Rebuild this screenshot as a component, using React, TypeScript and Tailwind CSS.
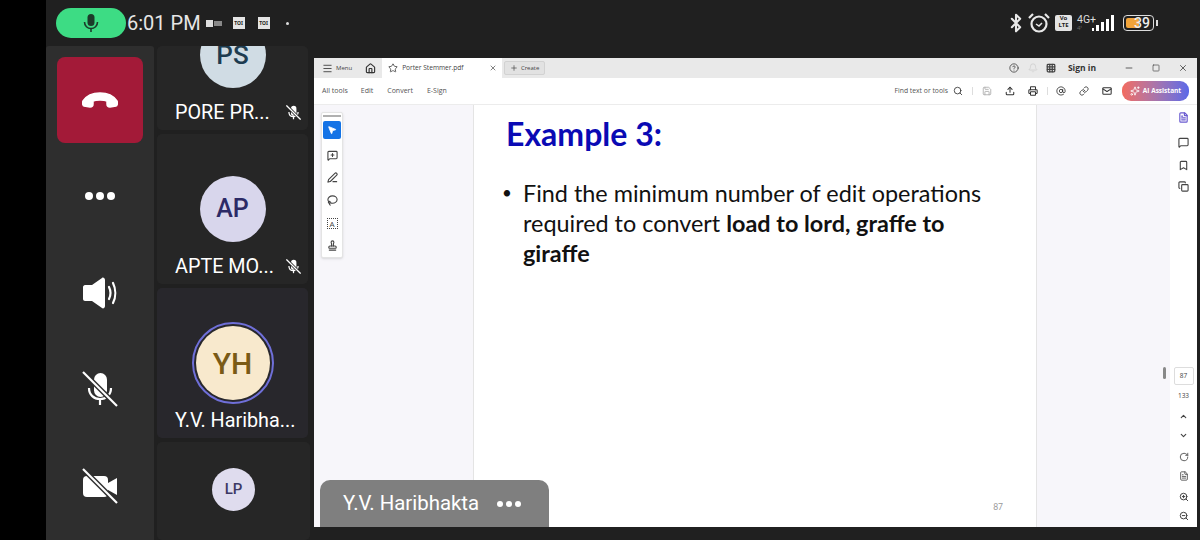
import { Bluetooth, Bookmark, ChevronDown, ChevronUp, Copy, FileText, Grid3x3, Home, Link, Lasso, Mail, Menu, MessageSquare, MessageSquarePlus, Minus, MousePointer2, PenLine, Plus, Printer, RotateCw, Save, Search, Star, Stamp, Upload, X, ZoomIn, ZoomOut, Bell, CircleHelp, Sparkles, Square, AtSign } from 'lucide-react'

const MicOffIcon = ({ size }: { size: number }) => (
  <svg width={size} height={size} viewBox="0 0 36 36" fill="none">
    <rect x="12" y="2" width="13" height="24" rx="6.5" fill="white" />
    <path d="M7 17c0 7 5 11 11 11s11-4 11-11" stroke="white" strokeWidth="2.2" />
    <path d="M18 28v6" stroke="white" strokeWidth="2.2" />
    <path d="M1 1l34 34" stroke="#2e2e2e" strokeWidth="5" />
    <path d="M1 1l34 34" stroke="white" strokeWidth="2.2" />
  </svg>
)

const VideoOffIcon = () => (
  <svg width="36" height="36" viewBox="0 0 36 36" fill="none">
    <rect x="1" y="8" width="25" height="21" rx="4" fill="white" />
    <path d="M26 15l9-5v17l-9-5z" fill="white" />
    <path d="M1 1l34 34" stroke="#2e2e2e" strokeWidth="5" />
    <path d="M1 1l34 34" stroke="white" strokeWidth="2.2" />
  </svg>
)

const SpeakerIcon = () => (
  <svg width="36" height="32" viewBox="0 0 36 32" fill="none">
    <path d="M1 10c0-1 1-2 2-2h7L20 1c1-1 3 0 3 2v26c0 2-2 3-3 2L10 24H3c-1 0-2-1-2-2z" fill="white" />
    <path d="M27 10c2 4 2 8 0 12" stroke="white" strokeWidth="2.2" strokeLinecap="round" />
    <path d="M31 6c3 6 3 14 0 20" stroke="white" strokeWidth="2.2" strokeLinecap="round" />
  </svg>
)

const HangUp = () => (
  <svg width="36" height="16" viewBox="0 0 36 16">
    <path d="M1 9C5 3 11 1 18 1s13 2 17 8c1 2 0 5-1 5l-6 1c-2 0-3-1-3-3V9c-2-1-5-1-7-1s-5 0-7 1v3c0 2-1 3-3 3l-6-1c-1 0-2-3-1-5z" fill="white" stroke="white" strokeWidth="1.500" />
  </svg>
)

const GreenMic = () => (
  <svg width="18" height="20" viewBox="0 0 18 20" fill="none">
    <rect x="5.5" y="1" width="7" height="12" rx="3.5" fill="#1c3b2a" />
    <path d="M2.5 9c0 4 3 6.5 6.5 6.5S15.500 13 15.500 9" stroke="#1c3b2a" strokeWidth="1.600" />
    <path d="M9 15.500V19" stroke="#1c3b2a" strokeWidth="1.600" />
  </svg>
)

const Dots = ({ size = 'big' }: { size?: 'big' | 'small' }) => (
  <div className={size === 'big' ? 'flex gap-[3px]' : 'flex gap-[3px]'}>
    <span className={size === 'big' ? 'w-2 h-2 rounded-full bg-white' : 'w-[6px] h-[6px] rounded-full bg-white'} />
    <span className={size === 'big' ? 'w-2 h-2 rounded-full bg-white' : 'w-[6px] h-[6px] rounded-full bg-white'} />
    <span className={size === 'big' ? 'w-2 h-2 rounded-full bg-white' : 'w-[6px] h-[6px] rounded-full bg-white'} />
  </div>
)

const NewsIcon = ({ label }: { label: string }) => (
  <div className="w-3 h-3 bg-[#e4e4e4] text-[5px] leading-3 text-center text-[#222] font-bold">{label}</div>
)

function StatusBar() {
  return (
    <div className="h-[46px] flex items-center text-white shrink-0">
      <div className="w-[70px] h-[30px] ml-[10px] rounded-full bg-[#3ddc84] flex items-center justify-center">
        <GreenMic />
      </div>
      <span className="text-[20px] ml-[1px] text-[#e6e6e6] font-['Roboto',sans-serif]">6:01 PM</span>
      <div className="ml-[5px] w-[16px] h-[8px] flex items-center gap-[1px]">
        <div className="w-[7px] h-[7px] bg-[#ddd]" />
        <div className="w-[8px] h-[5px] bg-[#888]" />
      </div>
      <div className="ml-[11px]"><NewsIcon label="TOI" /></div>
      <div className="ml-[13px]"><NewsIcon label="TOI" /></div>
      <span className="ml-[16px] w-[3px] h-[3px] rounded-full bg-[#ddd]" />
      <div className="ml-auto mr-[42px] flex items-center">
        <Bluetooth size={20} strokeWidth={2.5} className="text-[#e8e8e8]" />
        <svg width="24" height="22" viewBox="0 0 24 22" fill="none" className="ml-[1px]">
          <circle cx="12" cy="12" r="7.500" stroke="#e8e8e8" strokeWidth="2.200" />
          <path d="M9 12l3 2 3-3" stroke="#e8e8e8" strokeWidth="1.500" />
          <path d="M2 6l4-4M22 6l-4-4" stroke="#e8e8e8" strokeWidth="2.200" />
        </svg>
        <div className="ml-[4px] w-[17px] h-[16px] rounded-[2px] bg-[#e4e4e4] text-[#222] text-[6px] leading-[7px] text-center font-bold">
          Vo
          <br />
          LTE
        </div>
        <div className="ml-[5px] w-[20px] flex flex-col leading-none">
          <span className="text-[10.500px] text-[#ddd] font-['Roboto',sans-serif]">4G+</span>
          <span className="text-[6px] text-[#666]">4ᵗ</span>
        </div>
        <div className="flex items-end gap-[2px] h-[16px] -ml-[5px]">
          <span className="w-[2px] h-[3px] bg-white" />
          <span className="w-[3px] h-[6px] bg-white" />
          <span className="w-[3px] h-[9px] bg-white" />
          <span className="w-[3px] h-[12px] bg-white" />
          <span className="w-[3px] h-[16px] bg-white" />
        </div>
        <div className="ml-[9px] w-[31px] h-[16px] rounded-[4px] border border-[#ddd] p-[2px] flex items-center">
          <div className="w-[13px] h-[10px] rounded-[2px] bg-[#f2a43a]" />
          <span className="text-[14px] -ml-[5px] font-medium text-[#eee] font-['Roboto',sans-serif]">39</span>
        </div>
        <span className="ml-[2px] w-[2px] h-[6px] bg-[#ddd]" />
      </div>
    </div>
  )
}

function ControlRail() {
  return (
    <div className="w-[108px] shrink-0 bg-[#2e2e2e] rounded-t-[3px] flex flex-col items-center pt-[11px]">
      <div className="w-[86px] h-[86px] shrink-0 rounded-[8px] bg-[#a31a38] flex items-center justify-center">
        <HangUp />
      </div>
      <div className="w-full pt-[5px] flex flex-col items-center">
        <div className="h-[96.500px] flex items-center"><Dots /></div>
        <div className="h-[96.500px] flex items-center"><SpeakerIcon /></div>
        <div className="h-[96.500px] flex items-center"><MicOffIcon size={36} /></div>
        <div className="h-[96.500px] flex items-center"><VideoOffIcon /></div>
      </div>
    </div>
  )
}

const MutedMic = () => (
  <svg width="15" height="15" viewBox="0 0 36 36" fill="none">
    <rect x="12" y="2" width="13" height="24" rx="6.5" fill="white" />
    <path d="M7 17c0 7 5 11 11 11s11-4 11-11" stroke="white" strokeWidth="3" />
    <path d="M18 28v6" stroke="white" strokeWidth="3" />
    <path d="M1 1l34 34" stroke="#262626" strokeWidth="7" />
    <path d="M1 1l34 34" stroke="white" strokeWidth="3" />
  </svg>
)

function ParticipantColumn() {
  return (
    <div className="w-[153px] ml-[3px] shrink-0 flex flex-col gap-[4px] font-['Roboto',sans-serif] text-white">
      <div className="w-[151px] h-[84px] shrink-0 rounded-[5px] bg-[#262626] overflow-hidden flex flex-col items-center">
        <div className="w-[66px] h-[66px] -mt-[24px] shrink-0 rounded-full bg-[#d0dce4] text-[#1d3c50] flex items-center justify-center text-[26px] font-medium">
          PS
        </div>
        <div className="w-full flex items-center pl-[18px] mt-[11px] h-[28px]">
          <span className="text-[19.800px]">PORE PR...</span>
          <span className="ml-[16px] flex -mt-[2px]"><MutedMic /></span>
        </div>
      </div>
      <div className="w-[151px] h-[150px] shrink-0 rounded-[5px] bg-[#262626] flex flex-col items-center">
        <div className="w-[66px] h-[66px] mt-[42px] rounded-full bg-[#d8d6ec] text-[#2c2a66] flex items-center justify-center text-[25px] font-medium">AP</div>
        <div className="w-full flex items-center pl-[18px] mt-[11px] h-[28px]">
          <span className="text-[19.800px]">APTE MO...</span>
          <span className="ml-[12px] flex -mt-[2px]"><MutedMic /></span>
        </div>
      </div>
      <div className="w-[151px] h-[150px] shrink-0 rounded-[5px] bg-[#28272c] flex flex-col items-center">
        <div className="w-[82px] h-[82px] mt-[34px] rounded-full border-2 border-[#6f6fd8] p-[2px]">
          <div className="w-full h-full rounded-full bg-[#f8e9cd] text-[#7a5a16] flex items-center justify-center text-[30px] font-medium">YH</div>
        </div>
        <div className="w-full pl-[18px] mt-[3px] text-[19.800px] leading-[28px]">Y.V. Haribha...</div>
      </div>
      <div className="flex-1 rounded-[5px] bg-[#262626] flex justify-center">
        <div className="w-[43px] h-[43px] mt-[26px] rounded-full bg-[#dfdcee] text-[#3c3864] flex items-center justify-center text-[15px] font-medium">LP</div>
      </div>
    </div>
  )
}

function PdfTopRows() {
  return (
    <>
      <div className="h-[20px] shrink-0 bg-[#e9e9e9] flex items-center text-[#444]">
        <Menu size={11} className="ml-[8px]" />
        <span className="text-[6px] ml-[3px]">Menu</span>
        <Home size={11} strokeWidth={2.5} className="ml-[13px] text-[#333]" />
        <div className="ml-[6px] w-[120px] h-full bg-white flex items-center">
          <Star size={10} className="ml-[6px]" />
          <span className="text-[6.600px] ml-[4px]">Porter Stemmer.pdf</span>
          <X size={8} className="ml-auto mr-[5px]" />
        </div>
        <div className="ml-[2px] h-[14px] w-[41px] rounded-[2px] bg-[#e2e2e2] border border-[#d2d2d2] flex items-center justify-center gap-[3px] text-[6px]">
          <Plus size={8} />
          Create
        </div>
        <CircleHelp size={10} className="ml-auto" />
        <Bell size={10} className="ml-[9px] text-[#cfcfcf]" />
        <Grid3x3 size={10} className="ml-[8px]" strokeWidth={3} />
        <span className="ml-[12px] text-[8.500px] font-bold text-[#333]">Sign in</span>
        <Minus size={10} className="ml-[28px]" />
        <Square size={8} className="ml-[18px]" />
        <X size={10} className="ml-[18px] mr-[9px]" />
      </div>
      <div className="h-[27px] shrink-0 bg-white border-b border-[#ececec] flex items-center text-[7px] text-[#555]">
        <span className="ml-[8px]">All tools</span>
        <span className="ml-[13px]">Edit</span>
        <span className="ml-[14px]">Convert</span>
        <span className="ml-[14px]">E-Sign</span>
        <span className="ml-auto text-[6.800px]">Find text or tools</span>
        <Search size={10} className="ml-[5px] text-[#333]" />
        <span className="ml-[9px] w-px h-[8px] bg-[#ddd]" />
        <Save size={10} className="ml-[9px] text-[#aaa]" />
        <Upload size={10} strokeWidth={2.5} className="ml-[13px] text-[#333]" />
        <Printer size={10} strokeWidth={2.5} className="ml-[13px] text-[#333]" />
        <span className="ml-[9px] w-px h-[8px] bg-[#ddd]" />
        <AtSign size={10} className="ml-[8px] text-[#333]" />
        <Link size={10} className="ml-[13px] text-[#333]" />
        <Mail size={10} strokeWidth={2.5} className="ml-[13px] text-[#333]" />
        <div className="ml-[10px] mr-[8px] w-[67px] h-[20px] rounded-[9px] bg-gradient-to-r from-[#f26a5e] to-[#5b68e8] text-white flex items-center justify-center gap-[3px] text-[6.500px] font-bold">
          <Sparkles size={10} />
          AI Assistant
        </div>
      </div>
    </>
  )
}

function ToolPalette() {
  return (
    <div className="w-[22px] h-[146px] mt-[7px] ml-[7px] bg-white border border-[#e4e4e4] rounded-[2px] shadow-sm flex flex-col items-center text-[#444]">
      <span className="w-[18px] h-[2px] bg-[#b0b0b0] mt-[2px]" />
      <div className="w-[18px] h-[18px] mt-[4px] rounded-[2px] bg-[#1473e6] flex items-center justify-center">
        <MousePointer2 size={10} className="text-white" fill="white" />
      </div>
      <div className="flex-1 flex flex-col justify-around items-center pt-[5px]">
        <MessageSquarePlus size={11} strokeWidth={2.4} />
        <PenLine size={11} strokeWidth={2.4} />
        <Lasso size={11} strokeWidth={2.4} />
        <div className="w-[11px] h-[11px] border border-dotted border-[#444] text-[8px] leading-[10px] text-center font-medium">A</div>
        <Stamp size={11} strokeWidth={2.4} />
      </div>
    </div>
  )
}

function SlidePage() {
  return (
    <div className="w-[564px] shrink-0 bg-white border-l border-r border-[#e4e4e4] flex flex-col font-['Lato',sans-serif] relative">
      <h1 className="ml-[32px] mt-[10px] text-[32px] leading-[38px] font-bold text-[#0a0ab4]">Example 3:</h1>
      <div className="flex mt-[25px] ml-[28px] text-[23.400px] leading-[30px] text-[#111]">
        <span className="w-[21px] shrink-0 text-[17px]">•</span>
        <p className="w-[470px]">
          Find the minimum number of edit operations required to convert <b>load to lord, graffe to giraffe</b>
        </p>
      </div>
      <span className="mt-auto mb-[13px] ml-auto mr-[33px] text-[8.500px] text-[#999]">87</span>
    </div>
  )
}

function RightRail() {
  return (
    <div className="w-[27px] shrink-0 bg-white flex flex-col items-center text-[#444]">
      <FileText size={11} strokeWidth={2.6} className="mt-[7px] text-[#6a5bd0]" />
      <MessageSquare size={11} strokeWidth={2.4} className="mt-[14px]" />
      <Bookmark size={11} strokeWidth={2.4} className="mt-[12px]" />
      <Copy size={11} strokeWidth={2.4} className="mt-[10px]" />
      <div className="mt-auto w-[20px] h-[18px] border border-[#ddd] rounded-[2px] text-[6.500px] leading-[16px] text-center">87</div>
      <span className="mt-[6px] text-[6.500px] leading-[10px]">133</span>
      <ChevronUp size={9} className="mt-[11px]" strokeWidth={3} />
      <ChevronDown size={9} className="mt-[10px]" strokeWidth={3} />
      <RotateCw size={10} className="mt-[12px]" />
      <FileText size={10} className="mt-[9px]" />
      <ZoomIn size={10} strokeWidth={2.4} className="mt-[11px]" />
      <ZoomOut size={10} strokeWidth={2.4} className="mt-[9px] mb-[6px]" />
    </div>
  )
}

function PdfWindow() {
  return (
    <div className="w-[883px] ml-[4px] mt-[12px] mb-[13px] shrink-0 flex flex-col bg-[#f7f6fa] font-['Open_Sans',sans-serif]">
      <PdfTopRows />
      <div className="flex-1 flex min-h-0">
        <div className="w-[159px] shrink-0">
          <ToolPalette />
        </div>
        <SlidePage />
        <div className="flex-1 flex items-center justify-end">
          <span className="w-[3px] h-[12px] bg-[#888] mr-[4px] mt-[114px] rounded-full" />
        </div>
        <RightRail />
      </div>
    </div>
  )
}

export default function App() {
  return (
    <div className="w-[1200px] h-[540px] overflow-hidden bg-black flex relative">
      <div className="w-[46px] shrink-0" />
      <div className="flex-1 bg-[#202020] flex flex-col min-w-0">
        <StatusBar />
        <div className="flex-1 flex min-h-0">
          <ControlRail />
          <ParticipantColumn />
          <PdfWindow />
        </div>
      </div>
      {/* name pill over the shared screen */}
      <div className="absolute left-[320px] top-[480px] w-[229px] h-[47px] rounded-t-[10px] bg-[#7f7f7f] flex items-center text-white font-['Roboto',sans-serif]">
        <span className="ml-[23px] text-[20.400px]">Y.V. Haribhakta</span>
        <span className="ml-[18px]"><Dots size="small" /></span>
      </div>
    </div>
  )
}
